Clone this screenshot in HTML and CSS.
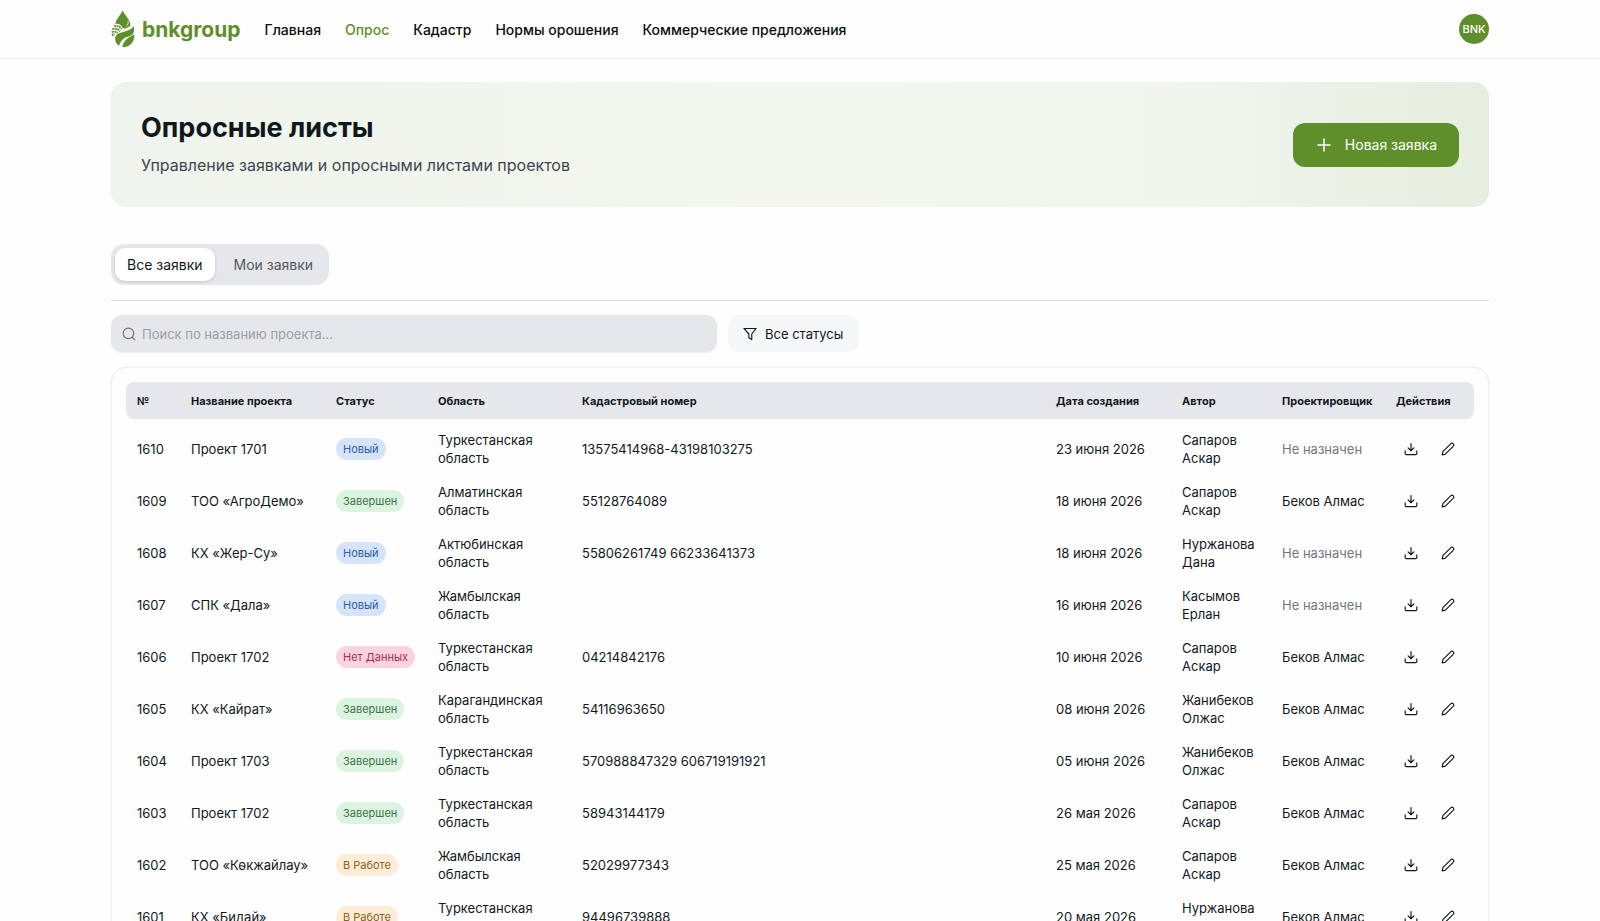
FILE: index.html
```
<!DOCTYPE html>
<html lang="ru">
<head>
<meta charset="UTF-8" />
<meta name="viewport" content="width=device-width, initial-scale=1" />
<title>Опросные листы</title>
<link rel="stylesheet" href="styles.css">
</head>
<body>
<svg class="sprite" aria-hidden="true">
  <symbol id="icon-download" viewBox="0 0 24 24">
    <path d="M12 2.5v12.5M7 10l5 5 5-5M2 15v4.5a2 2 0 0 0 2 2h16a2 2 0 0 0 2-2V15" />
  </symbol>
  <symbol id="icon-edit" viewBox="0 0 24 24">
    <path d="M2 22l1.2-5.4L17 2.8a2.6 2.6 0 0 1 3.8 0l.4.4a2.6 2.6 0 0 1 0 3.8L7.4 20.8z" />
  </symbol>
</svg>

<header class="header">
  <div class="container header-inner">
    <a href="#" class="logo">
      <svg class="logo-mark" viewBox="32 28 74 118" aria-hidden="true">
        <path d="M68 29C64 41 48 55 45 71C56 69 64 74 68 84C76 88 86 82 92 76C94 62 73 43 68 29Z" fill="#5f8f2a" />
        <path d="M84 62C87 69 84 75 79 78" fill="none" stroke="#fff" stroke-width="2.5" />
        <path d="M102 78C107 97 100 107 87 110C70 114 60 125 57 139C46 133 42 120 46 110C54 93 90 99 102 78Z" fill="#5f8f2a" />
        <path d="M104 104C105 127 92 143 67 144C68 128 82 113 104 104Z" fill="#5f8f2a" />
        <path d="M41 78Q56 75 64 87M36 87Q50 83 60 94M34 97Q45 92 52 100M35 107Q39 102 43 106" fill="none" stroke="#5f8f2a" stroke-width="6" stroke-dasharray="6 2" />
      </svg>
      <span>bnkgroup</span>
    </a>
    <nav class="nav">
      <a href="#">Главная</a>
      <a href="#" class="active">Опрос</a>
      <a href="#">Кадастр</a>
      <a href="#">Нормы орошения</a>
      <a href="#">Коммерческие предложения</a>
    </nav>
    <button type="button" class="avatar">BNK</button>
  </div>
</header>

<main class="container">
  <section class="banner">
    <div>
      <h1>Опросные листы</h1>
      <p>Управление заявками и опросными листами проектов</p>
    </div>
    <button type="button" class="new-btn">
      <svg viewBox="0 0 18 18" aria-hidden="true"><path d="M9 3v12M3 9h12" /></svg>
      Новая заявка
    </button>
  </section>

  <div class="tabs-row">
    <div class="tabs" role="tablist">
      <button type="button" class="tab selected" role="tab" aria-selected="true">Все заявки</button>
      <button type="button" class="tab" role="tab" aria-selected="false">Мои заявки</button>
    </div>
  </div>

  <div class="filters">
    <label class="search">
      <svg viewBox="0 0 24 24" aria-hidden="true"><circle cx="11" cy="11" r="9" /><path d="M18 18l4 4" /></svg>
      <input type="text" name="search" placeholder="Поиск по названию проекта..." aria-label="Поиск по названию проекта" />
    </label>
    <label class="status-filter">
      <svg viewBox="0 0 24 24" aria-hidden="true"><path d="M1.5 2.5h21L15 12v9.5l-5-3V12z" /></svg>
      <select name="status" aria-label="Статус">
        <option>Все статусы</option>
        <option>Новый</option>
        <option>В Работе</option>
        <option>Завершен</option>
        <option>Нет Данных</option>
      </select>
    </label>
  </div>

  <div class="card">
    <table class="table">
      <colgroup>
        <col class="col-id"><col class="col-name"><col class="col-status"><col class="col-region"><col>
        <col class="col-date"><col class="col-author"><col class="col-designer"><col class="col-actions">
      </colgroup>
      <thead>
        <tr>
          <th>№</th>
          <th>Название проекта</th>
          <th>Статус</th>
          <th>Область</th>
          <th>Кадастровый номер</th>
          <th>Дата создания</th>
          <th>Автор</th>
          <th>Проектировщик</th>
          <th>Действия</th>
        </tr>
      </thead>
      <tbody>
        <tr>
          <td>1610</td>
          <td>Проект 1701</td>
          <td><span class="chip new">Новый</span></td>
          <td>Туркестанская область</td>
          <td>13575414968-43198103275</td>
          <td>23 июня 2026</td>
          <td>Сапаров Аскар</td>
          <td class="muted">Не назначен</td>
          <td><div class="actions"><button type="button" aria-label="Скачать"><svg><use href="#icon-download" /></svg></button><button type="button" aria-label="Изменить"><svg><use href="#icon-edit" /></svg></button></div></td>
        </tr>
        <tr>
          <td>1609</td>
          <td>ТОО «АгроДемо»</td>
          <td><span class="chip done">Завершен</span></td>
          <td>Алматинская область</td>
          <td>55128764089</td>
          <td>18 июня 2026</td>
          <td>Сапаров Аскар</td>
          <td>Беков Алмас</td>
          <td><div class="actions"><button type="button" aria-label="Скачать"><svg><use href="#icon-download" /></svg></button><button type="button" aria-label="Изменить"><svg><use href="#icon-edit" /></svg></button></div></td>
        </tr>
        <tr>
          <td>1608</td>
          <td>КХ «Жер-Су»</td>
          <td><span class="chip new">Новый</span></td>
          <td>Актюбинская область</td>
          <td>55806261749 66233641373</td>
          <td>18 июня 2026</td>
          <td>Нуржанова Дана</td>
          <td class="muted">Не назначен</td>
          <td><div class="actions"><button type="button" aria-label="Скачать"><svg><use href="#icon-download" /></svg></button><button type="button" aria-label="Изменить"><svg><use href="#icon-edit" /></svg></button></div></td>
        </tr>
        <tr>
          <td>1607</td>
          <td>СПК «Дала»</td>
          <td><span class="chip new">Новый</span></td>
          <td>Жамбылская область</td>
          <td></td>
          <td>16 июня 2026</td>
          <td>Касымов Ерлан</td>
          <td class="muted">Не назначен</td>
          <td><div class="actions"><button type="button" aria-label="Скачать"><svg><use href="#icon-download" /></svg></button><button type="button" aria-label="Изменить"><svg><use href="#icon-edit" /></svg></button></div></td>
        </tr>
        <tr>
          <td>1606</td>
          <td>Проект 1702</td>
          <td><span class="chip nodata">Нет Данных</span></td>
          <td>Туркестанская область</td>
          <td>04214842176</td>
          <td>10 июня 2026</td>
          <td>Сапаров Аскар</td>
          <td>Беков Алмас</td>
          <td><div class="actions"><button type="button" aria-label="Скачать"><svg><use href="#icon-download" /></svg></button><button type="button" aria-label="Изменить"><svg><use href="#icon-edit" /></svg></button></div></td>
        </tr>
        <tr>
          <td>1605</td>
          <td>КХ «Кайрат»</td>
          <td><span class="chip done">Завершен</span></td>
          <td>Карагандинская область</td>
          <td>54116963650</td>
          <td>08 июня 2026</td>
          <td>Жанибеков Олжас</td>
          <td>Беков Алмас</td>
          <td><div class="actions"><button type="button" aria-label="Скачать"><svg><use href="#icon-download" /></svg></button><button type="button" aria-label="Изменить"><svg><use href="#icon-edit" /></svg></button></div></td>
        </tr>
        <tr>
          <td>1604</td>
          <td>Проект 1703</td>
          <td><span class="chip done">Завершен</span></td>
          <td>Туркестанская область</td>
          <td>570988847329 606719191921</td>
          <td>05 июня 2026</td>
          <td>Жанибеков Олжас</td>
          <td>Беков Алмас</td>
          <td><div class="actions"><button type="button" aria-label="Скачать"><svg><use href="#icon-download" /></svg></button><button type="button" aria-label="Изменить"><svg><use href="#icon-edit" /></svg></button></div></td>
        </tr>
        <tr>
          <td>1603</td>
          <td>Проект 1702</td>
          <td><span class="chip done">Завершен</span></td>
          <td>Туркестанская область</td>
          <td>58943144179</td>
          <td>26 мая 2026</td>
          <td>Сапаров Аскар</td>
          <td>Беков Алмас</td>
          <td><div class="actions"><button type="button" aria-label="Скачать"><svg><use href="#icon-download" /></svg></button><button type="button" aria-label="Изменить"><svg><use href="#icon-edit" /></svg></button></div></td>
        </tr>
        <tr>
          <td>1602</td>
          <td>ТОО «Көкжайлау»</td>
          <td><span class="chip progress">В Работе</span></td>
          <td>Жамбылская область</td>
          <td>52029977343</td>
          <td>25 мая 2026</td>
          <td>Сапаров Аскар</td>
          <td>Беков Алмас</td>
          <td><div class="actions"><button type="button" aria-label="Скачать"><svg><use href="#icon-download" /></svg></button><button type="button" aria-label="Изменить"><svg><use href="#icon-edit" /></svg></button></div></td>
        </tr>
        <tr>
          <td>1601</td>
          <td>КХ «Бидай»</td>
          <td><span class="chip progress">В Работе</span></td>
          <td>Туркестанская область</td>
          <td>94496739888</td>
          <td>20 мая 2026</td>
          <td>Нуржанова Дана</td>
          <td>Беков Алмас</td>
          <td><div class="actions"><button type="button" aria-label="Скачать"><svg><use href="#icon-download" /></svg></button><button type="button" aria-label="Изменить"><svg><use href="#icon-edit" /></svg></button></div></td>
        </tr>
      </tbody>
    </table>
  </div>
</main>
</body>
</html>
```
FILE: styles.css
```
* {
  box-sizing: border-box;
}
body {
  margin: 0;
  font-family: Inter, "Noto Sans", sans-serif;
  font-size: 13px;
  color: #11181c;
  background: #fefefe;
}
button, input, select {
  font: inherit;
  color: inherit;
  border: none;
  background: none;
  padding: 0;
  margin: 0;
  outline: none;
}
button {
  cursor: pointer;
}
svg {
  fill: none;
  stroke: currentColor;
  stroke-width: 2;
  stroke-linecap: round;
  stroke-linejoin: round;
}
.sprite {
  display: none;
}
.container {
  max-width: 1378px;
  margin: 0 auto;
}

/* header */
.header {
  border-bottom: 1px solid #e8e8ea;
}
.header-inner {
  display: flex;
  align-items: center;
  height: 58px;
}
.logo {
  display: flex;
  align-items: center;
  gap: 7px;
  margin-right: 24px;
  font-size: 21px;
  font-weight: 700;
  color: #5f8f2a;
  text-decoration: none;
}
.logo-mark {
  width: 24px;
  height: 38px;
  stroke: none;
  stroke-linecap: butt;
}
.nav {
  display: flex;
  gap: 24px;
  font-size: 14px;
  font-weight: 500;
}
.nav a {
  color: #0b0d0e;
  text-decoration: none;
}
.nav .active {
  color: #5f8f2a;
}
.avatar {
  width: 30px;
  height: 30px;
  margin-left: auto;
  border-radius: 50%;
  background: #5f8f2a;
  color: #fff;
  font-size: 11px;
  font-weight: 500;
}

/* banner */
.banner {
  display: flex;
  align-items: center;
  justify-content: space-between;
  margin-top: 23px;
  padding: 29px 30px;
  border-radius: 15px;
  background: linear-gradient(90deg, #eff4ec 0%, #f3f7ee 50%, #f1f6ed 80%, #eaf1e6 88%, #e6eedf 100%);
}
.banner h1 {
  margin: 0;
  font-size: 27px;
  font-weight: 700;
  line-height: 34px;
}
.banner p {
  margin: 7px 0 0;
  font-size: 16px;
  line-height: 26px;
  color: #3f4650;
}
.new-btn {
  display: flex;
  align-items: center;
  gap: 12px;
  height: 44px;
  padding: 0 22px;
  border-radius: 12px;
  background: #5f8f2a;
  color: #fff;
  font-size: 14px;
}
.new-btn svg {
  width: 18px;
  height: 18px;
  stroke-width: 1.5;
}

/* tabs */
.tabs-row {
  margin-top: 37px;
  padding-bottom: 15px;
  border-bottom: 1px solid #d8dadd;
}
.tabs {
  display: inline-flex;
  gap: 7px;
  padding: 4px;
  border-radius: 13px;
  background: #e6e7ea;
  vertical-align: top;
}
.tab {
  height: 33px;
  padding: 0 12px;
  border-radius: 10px;
  font-size: 14px;
  color: #52585f;
}
.tab.selected {
  background: #fff;
  color: #11181c;
  box-shadow: 0 1px 3px rgba(0,0,0,0.15);
}

/* filters */
.filters {
  display: flex;
  gap: 11px;
  margin-top: 14px;
}
.search {
  display: flex;
  align-items: center;
  gap: 6px;
  flex: 0 1 606px;
  height: 37px;
  padding: 0 11px;
  border-radius: 11px;
  background: #e6e7ea;
  box-shadow: 0 1px 2px rgba(0,0,0,0.06);
}
.search svg {
  width: 14px;
  height: 14px;
  flex: none;
  color: #6c727a;
}
.search input {
  flex: 1;
}
.search input::placeholder {
  color: #9b9fa6;
  opacity: 1;
}
.status-filter {
  display: flex;
  align-items: center;
  gap: 8px;
  height: 37px;
  padding: 0 15px;
  border-radius: 11px;
  background: #f6f7f9;
}
.status-filter svg {
  width: 14px;
  height: 14px;
}
.status-filter select {
  appearance: none;
  cursor: pointer;
}

/* table */
.card {
  margin-top: 15px;
  padding: 14px;
  border: 1px solid #f0f0f1;
  border-radius: 15px;
  background: #fefefe;
  box-shadow: 0 0 3px rgba(0,0,0,0.06);
}
.table {
  width: 100%;
  table-layout: fixed;
  border-collapse: separate;
  border-spacing: 0;
}
.col-id { width: 54px; }
.col-name { width: 145px; }
.col-status { width: 102px; }
.col-region { width: 144px; }
.col-date { width: 126px; }
.col-author { width: 100px; }
.col-designer { width: 114px; }
.col-actions { width: 89px; }
.table th {
  height: 37px;
  padding: 0 11px;
  background: #e6e7ea;
  font-size: 11px;
  font-weight: 700;
  text-align: left;
  white-space: nowrap;
}
.table th:first-child {
  border-radius: 8px 0 0 8px;
}
.table th:last-child {
  border-radius: 0 8px 8px 0;
}
.table td {
  height: 52px;
  padding: 0 11px;
  line-height: 18px;
}
.table tbody tr:first-child td {
  height: 56px;
  padding-top: 4px;
}
.table .muted {
  color: #74787e;
}
.chip {
  display: inline-block;
  height: 22px;
  padding: 0 7px;
  border-radius: 11px;
  font-size: 11px;
  line-height: 22px;
  white-space: nowrap;
}
.chip.new {
  background: #d6e4fa;
  color: #2f5da8;
}
.chip.done {
  background: #dcf3e0;
  color: #3d7549;
}
.chip.nodata {
  background: #fad3de;
  color: #a82e52;
}
.chip.progress {
  background: #fdecd6;
  color: #8a6224;
}
.actions {
  display: flex;
  gap: 7px;
}
.actions button {
  display: flex;
  align-items: center;
  justify-content: center;
  width: 30px;
  height: 30px;
}
.actions svg {
  width: 14px;
  height: 14px;
}
```
